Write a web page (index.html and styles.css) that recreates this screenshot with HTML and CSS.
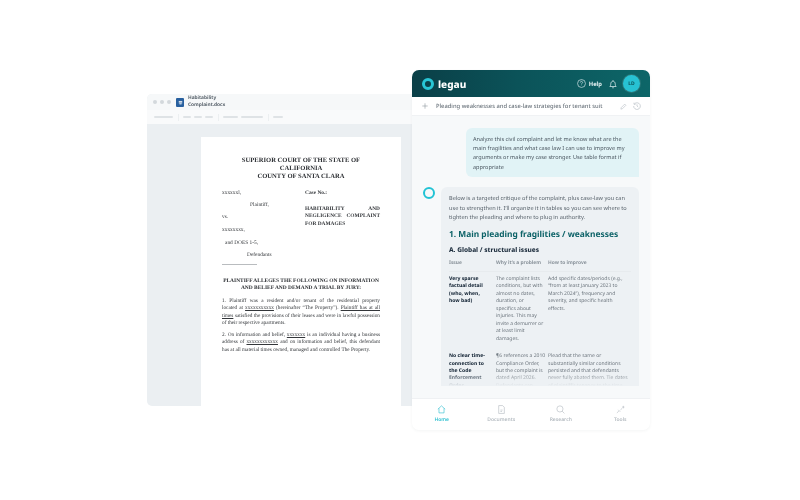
FILE: index.html
```html
<!DOCTYPE html>
<html lang="en">
<head>
<meta charset="utf-8">
<title>Legau</title>
<link rel="stylesheet" href="styles.css">
</head>
<body>
<main class="stage">
  <section class="doc-window">
    <header class="doc-title">
      <span class="dots"><i></i><i></i><i></i></span>
      <span class="word-icon"><svg viewBox="0 0 10 10"><path d="M2.500 3.500h5M2.500 5.500h5M3.500 7h3" fill="none" stroke="#fff" stroke-width="1.200"/></svg></span>
      <span class="doc-name">Habitability<br>Complaint.docx</span>
    </header>
    <div class="doc-toolbar">
      <i class="b w20"></i><i class="sep"></i><i class="b w8"></i><i class="b w8"></i><i class="b w8"></i><i class="sep"></i><i class="b w14"></i><i class="b w23"></i><i class="sep"></i><i class="b w11"></i>
    </div>
    <div class="doc-body">
      <article class="paper">
        <h1 class="court">SUPERIOR COURT OF THE STATE OF<br>CALIFORNIA<br>COUNTY OF SANTA CLARA</h1>
        <div class="caption">
          <div class="cap-left">
            <p class="c1">xxxxxxl,</p>
            <p class="c2">Plaintiff,</p>
            <p class="c3">vs.</p>
            <p class="c4">xxxxxxxx,</p>
            <p class="c5">and DOES 1-5,</p>
            <p class="c6">Defendants</p>
            <div class="rule"></div>
          </div>
          <div class="cap-right">
            <p class="case">Case No.:</p>
            <p class="cap-title"><span class="line">HABITABILITY AND</span><span class="line">NEGLIGENCE COMPLAINT</span>FOR DAMAGES</p>
          </div>
        </div>
        <h2 class="alleges">PLAINTIFF ALLEGES THE FOLLOWING ON INFORMATION<br>AND BELIEF AND DEMAND A TRIAL BY JURY:</h2>
        <p class="para"><span class="line">1. Plaintiff was a resident and/or tenant of the residential property</span><span class="line">located at <u>xxxxxxxxxxx</u> (hereinafter “The Property”). <u>Plaintiff has at all</u></span><span class="line"><u>times</u> satisfied the provisions of their leases and were in lawful possession</span>of their respective apartments.</p>
        <p class="para para-next"><span class="line">2. On information and belief, <u>xxxxxxx</u> is an individual having a business</span><span class="line">address of <u>xxxxxxxxxxxx</u> and on information and belief, this defendant</span>has at all material times owned, managed and controlled The Property.</p>
      </article>
    </div>
  </section>

  <section class="chat-window">
    <header class="app-bar">
      <span class="logo-ring"></span>
      <span class="logo-word">legau</span>
      <span class="spacer"></span>
      <svg class="bar-icon" viewBox="0 0 16 16" width="9" height="9"><circle cx="8" cy="8" r="7"/><path d="M6 6.200a2 2 0 1 1 3 1.700c-.7.4-1 .8-1 1.600"/><path d="M8 11.800v.4"/></svg>
      <span class="help">Help</span>
      <svg class="bar-icon bell" viewBox="0 0 16 16" width="10" height="10"><path d="M3 12c1-1.200 1.400-2 1.400-4.200C4.400 5.500 6 3.500 8 3.500s3.600 2 3.600 4.300c0 2.200.4 3 1.400 4.200z"/><path d="M6.700 14h2.600M8 2v1.500"/></svg>
      <span class="avatar">LD</span>
    </header>
    <div class="thread-bar">
      <svg class="thin-icon plus" viewBox="0 0 10 10" width="6" height="6"><path d="M5 .5v9M.5 5h9"/></svg>
      <span class="thread-title">Pleading weaknesses and case-law strategies for tenant suit</span>
      <span class="spacer"></span>
      <svg class="thin-icon" viewBox="0 0 12 12" width="7" height="7"><path d="M1.500 10.500l.6-2.600 6-6 2 2-6 6z"/></svg>
      <svg class="thin-icon hist" viewBox="0 0 12 12" width="8" height="8"><path d="M2.300 2.800A5 5 0 1 1 1 6"/><path d="M1.500 1v2.400h2.400M6 3.500V6l1.800 1.500"/></svg>
    </div>
    <div class="conversation">
      <div class="user-msg">Analyze this civil complaint and let me know what are the<br>main fragilities and what case law I can use to improve my<br>arguments or make my case stronger. Use table format if<br>appropriate</div>
      <div class="reply">
        <span class="reply-ring"></span>
        <div class="reply-card">
          <p class="intro">Below is a targeted critique of the complaint, plus case-law you can<br>use to strengthen it. I’ll organize it in tables so you can see where to<br>tighten the pleading and where to plug in authority.</p>
          <h3 class="h-main">1. Main pleading fragilities / weaknesses</h3>
          <h4 class="h-sub">A. Global / structural issues</h4>
          <div class="issues">
            <div class="th">Issue</div><div class="th">Why it’s a problem</div><div class="th">How to improve</div>
            <div class="td lead">Very sparse<br>factual detail<br>(who, when,<br>how bad)</div>
            <div class="td">The complaint lists<br>conditions, but with<br>almost no dates,<br>duration, or<br>specifics about<br>injuries. This may<br>invite a demurrer or<br>at least limit<br>damages.</div>
            <div class="td">Add specific dates/periods (e.g.,<br>“from at least January 2023 to<br>March 2024”), frequency and<br>severity, and specific health<br>effects.</div>
            <div class="td lead">No clear time-<br>connection to<br>the Code<br>Enforcement<br>Order</div>
            <div class="td">¶6 references a 2010<br>Compliance Order,<br>but the complaint is<br>dated April 2026.<br>Defendants can</div>
            <div class="td">Plead that the same or<br>substantially similar conditions<br>persisted and that defendants<br>never fully abated them. Tie dates<br>of plaintiff’s tenancy to the time</div>
          </div>
          <div class="fade"></div>
        </div>
      </div>
    </div>
    <nav class="tabs">
      <div class="tab active"><svg viewBox="0 0 16 16" width="9" height="9"><path d="M1.500 7.500L8 1.500l6.500 6M3.500 6V14h9V6"/></svg><span>Home</span></div>
      <div class="tab"><svg viewBox="0 0 16 16" width="9" height="9"><path d="M3 1h7l3 3v11H3z"/><path d="M6 9h4M6 11.500h3"/></svg><span>Documents</span></div>
      <div class="tab"><svg viewBox="0 0 16 16" width="9" height="9"><circle cx="7" cy="7" r="5.500"/><path d="M11 11l4 4"/></svg><span>Research</span></div>
      <div class="tab"><svg viewBox="0 0 16 16" width="9" height="9"><path d="M1.500 14L5 11M4 8.500L7.500 12M8 8.500l3-2.500M13 1.500v4.500M11 3.700h4"/></svg><span>Tools</span></div>
    </nav>
  </section>
</main>
</body>
</html>
```
FILE: styles.css
```css
* { box-sizing: border-box; }
html, body { margin: 0; padding: 0; background: #fff; }
p, h1, h2, h3, h4 { margin: 0; }
.stage { position: relative; width: 800px; height: 500px; overflow: hidden; background: #fff; font-family: "Noto Sans", sans-serif; text-rendering: geometricPrecision; filter: blur(.3px); }
.spacer { flex: 1; }
.line { display: block; text-align: justify; text-align-last: justify; }

/* Document window */
.doc-window { position: absolute; left: 147px; top: 94px; width: 265px; height: 312px; display: flex; flex-direction: column; border-radius: 5px 0 0 5px; overflow: hidden; background: #ebeff2; }
.doc-title { height: 16px; flex: none; display: flex; align-items: center; background: #f6f8f9; padding-left: 6px; }
.dots { display: flex; gap: 3px; }
.dots i { width: 4px; height: 4px; border-radius: 50%; background: #d3d8dc; }
.word-icon { width: 8px; height: 9px; margin-left: 5px; background: #28609f; border-radius: 1px; display: flex; align-items: center; justify-content: center; }
.word-icon svg { width: 7px; height: 7px; }
.doc-name { margin-left: 4px; font-size: 4.800px; line-height: 7px; font-weight: 700; color: #59636c; }
.doc-toolbar { height: 14px; flex: none; display: flex; align-items: center; gap: 3px; padding-left: 7px; background: #f9fafb; }
.b { display: block; height: 2.500px; border-radius: 2px; background: #dfe3e6; }
.w20 { width: 19px; } .w8 { width: 8px; } .w14 { width: 15px; } .w23 { width: 22px; } .w11 { width: 10px; }
.sep { width: 1px; height: 7px; background: #eceff1; margin: 0 1.500px; }
.doc-body { flex: 1; display: flex; padding: 13px 0 0 54px; min-height: 0; }
.paper { width: 200px; height: 269px; background: #fff; padding: 20px 21px 0 21px; font-family: "Liberation Serif", serif; color: #33363a; font-size: 5.400px; line-height: 7.400px; }
.court { font-size: 6.600px; line-height: 8.200px; font-weight: 700; text-align: center; color: #2b2e32; }
.caption { display: grid; grid-template-columns: 83px 75px; margin-top: 8px; }
.c2 { margin: 4.500px 0 0 28px; } .c3 { margin-top: 5.500px; } .c4 { margin-top: 5.500px; } .c5 { margin: 5px 0 0 3px; } .c6 { margin: 5px 0 0 25px; }
.rule { width: 35px; border-top: 1px solid #b9bcbf; margin-top: 4px; }
.case { font-weight: 700; }
.cap-title { margin-top: 9px; font-weight: 700; }
.alleges { margin-top: 13px; font-size: 5.450px; line-height: 7.200px; font-weight: 700; text-align: center; color: #2b2e32; white-space: nowrap; }
.para { margin-top: 6px; font-size: 5.250px; white-space: nowrap; }
.para-next { margin-top: 4.500px; }

/* Chat window */
.chat-window { position: absolute; left: 412px; top: 70px; width: 238px; height: 360px; display: flex; flex-direction: column; border-radius: 7px; overflow: hidden; background: #f7f9fa; box-shadow: 0 1px 3px rgba(60,80,90,.06); }
.app-bar { height: 27px; flex: none; display: flex; align-items: center; padding: 0 10px; color: #fff; background: linear-gradient(90deg, #0a3f47 0%, #0b5359 45%, #0d6668 100%); }
.logo-ring { width: 12px; height: 12px; border: 3px solid #28c6d5; border-radius: 50%; }
.logo-word { margin-left: 4px; font-size: 10px; line-height: 12px; font-weight: 800; color: #fff; }
.bar-icon { fill: none; stroke: #dcecee; stroke-width: 1.200; }
.help { margin-left: 3px; font-size: 5.800px; font-weight: 700; color: #e5f1f2; }
.bell { margin-left: 6px; }
.avatar { width: 17px; height: 17px; margin-left: 5px; border-radius: 50%; background: #27c2d3; color: #0b5056; font-size: 5px; font-weight: 700; display: flex; align-items: center; justify-content: center; box-shadow: 0 0 0 1px rgba(255,255,255,.12); }
.thread-bar { height: 19px; flex: none; display: flex; align-items: center; gap: 3px; padding: 0 9px 0 10px; background: #fff; border-bottom: 1px solid #f0f2f4; }
.thin-icon { fill: none; stroke: #b5bcc2; stroke-width: 1; }
.plus { margin-right: 5px; stroke: #8e979e; }
.hist { margin-left: 3px; }
.thread-title { font-size: 5.800px; font-weight: 500; color: #6b747c; white-space: nowrap; }
.conversation { height: 282px; flex: none; padding: 12px 11px 0; overflow: hidden; }
.user-msg { margin-left: 43px; width: 173px; height: 49px; padding: 7px 7px; background: #e1f3f6; border-radius: 6px 6px 0 6px; font-size: 5.550px; line-height: 9.200px; color: #4a5660; white-space: nowrap; }
.reply { display: flex; margin-top: 10px; }
.reply-ring { width: 12px; height: 12px; flex: none; border: 2.500px solid #22c3d4; border-radius: 50%; }
.reply-card { position: relative; width: 198px; height: 199px; margin-left: 6px; padding: 7px 8px 0; background: #edf1f4; border-radius: 6px 6px 0 0; overflow: hidden; }
.intro { font-size: 5.600px; line-height: 9.500px; color: #555f68; white-space: nowrap; }
.h-main { margin-top: 6.500px; font-size: 8.400px; line-height: 11px; font-weight: 700; color: #0c6267; white-space: nowrap; }
.h-sub { margin-top: 5px; font-size: 6.500px; line-height: 9px; font-weight: 800; color: #1f2f3f; }
.issues { display: grid; grid-template-columns: 47px 52px 1fr; margin-top: 5.500px; white-space: nowrap; }
.th { font-size: 4.900px; line-height: 7px; font-weight: 700; color: #8a939b; padding-bottom: 4.500px; border-bottom: 1px solid #e7ebee; }
.td { font-size: 5px; line-height: 7.450px; color: #6d767e; padding: 4px 0 6px; }
.td.lead { font-weight: 800; color: #1f2f3f; }
.fade { position: absolute; left: 0; right: 0; bottom: 0; height: 14px; background: linear-gradient(rgba(237,241,244,0), #edf1f4); }
.tabs { flex: 1; display: grid; grid-template-columns: repeat(4, 1fr); padding: 6px 0 0; background: #fff; border-top: 1px solid #eff1f3; }
.tab { display: flex; flex-direction: column; align-items: center; gap: 3px; font-size: 5px; line-height: 7px; font-weight: 600; color: #b4bbc1; }
.tab svg { fill: none; stroke: #b4bbc1; stroke-width: 1.100; }
.tab.active { color: #2fc0d0; }
.tab.active svg { stroke: #2fc0d0; }
```
